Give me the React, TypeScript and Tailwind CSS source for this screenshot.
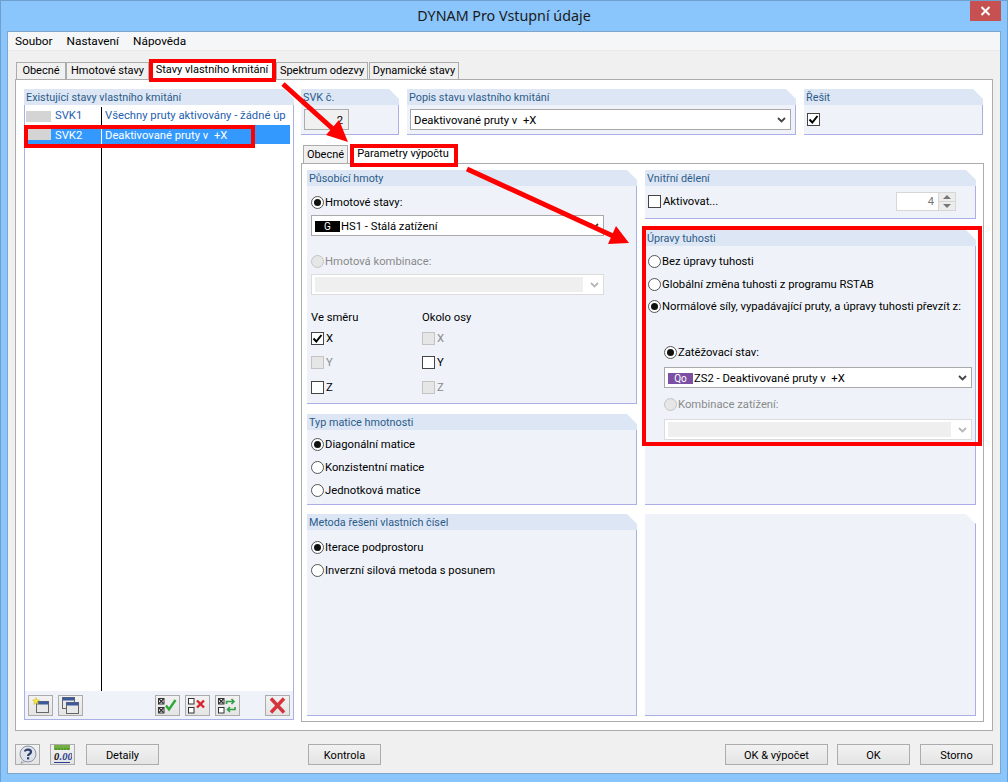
import React from 'react';

const Group: React.FC<{ title: string; className?: string; children?: React.ReactNode }> = ({ title, className = '', children }) => (
    <div className={`flex flex-col ${className}`}>
        <div className="h-[16px] shrink-0 whitespace-nowrap bg-[#dce6f4] pl-[2px] text-[10.8px] leading-[17px] text-[#2c5c8a] [clip-path:polygon(0_0,calc(100%-10px)_0,100%_10px,100%_100%,0_100%)]">{title}</div>
        <div className="flex flex-1 flex-col border-r border-b border-[#aab0e6] bg-[#eff3f9]">{children}</div>
    </div>
);

const Radio: React.FC<{ label: string; checked?: boolean; disabled?: boolean; className?: string }> = ({ label, checked, disabled, className = '' }) => (
    <div className={`flex h-[20px] shrink-0 items-center gap-[1px] whitespace-nowrap ${disabled ? 'text-[#8a8a8a]' : 'text-black'} ${className}`}>
        <div className={`flex h-[13px] w-[13px] shrink-0 items-center justify-center rounded-full border ${disabled ? 'border-[#c4c4c4] bg-[#e6e6e6]' : 'border-[#555555] bg-white'}`}>
            {checked && <div className="h-[7px] w-[7px] rounded-full bg-[#111111]" />}
        </div>
        <span className="pt-[2px]">{label}</span>
    </div>
);

const Check: React.FC<{ label: string; checked?: boolean; disabled?: boolean; className?: string }> = ({ label, checked, disabled, className = '' }) => (
    <div className={`flex h-[20px] items-center gap-[2px] whitespace-nowrap ${disabled ? 'text-[#8a8a8a]' : 'text-black'} ${className}`}>
        <div className={`flex h-[13px] w-[13px] shrink-0 items-center justify-center border ${disabled ? 'border-[#c4c4c4] bg-[#e6e6e6]' : 'border-[#444444] bg-white'}`}>
            {checked && (
                <svg width="11" height="11" viewBox="0 0 11 11"><path d="M1.5 5.5 4.3 8.5 9.5 2" fill="none" stroke="#000" strokeWidth="2" /></svg>
            )}
        </div>
        <span className="pt-[2px]">{label}</span>
    </div>
);

const Chevron: React.FC<{ color?: string }> = ({ color = '#444444' }) => (
    <svg width="9" height="6" viewBox="0 0 9 6"><path d="M1 1 4.5 4.5 8 1" fill="none" stroke={color} strokeWidth="1.8" /></svg>
);

const Select: React.FC<{ disabled?: boolean; className?: string; children?: React.ReactNode }> = ({ disabled, className = '', children }) => (
    <div className={`flex h-[21px] shrink-0 items-center whitespace-nowrap border bg-white pl-[3px] ${disabled ? 'border-[#dcdcdc]' : 'border-[#a9a9a9]'} ${className}`}>
        <div className={`flex min-w-0 flex-1 items-center ${disabled ? '' : 'pt-[2px]'}`}>
            {disabled ? <div className="mr-[2px] h-[15px] flex-1 bg-[#efefef]" /> : children}
        </div>
        <div className="flex w-[18px] shrink-0 justify-center">
            <Chevron color={disabled ? '#b8b8b8' : '#444444'} />
        </div>
    </div>
);

const Btn: React.FC<{ className?: string; children?: React.ReactNode }> = ({ className = '', children }) => (
    <div className={`flex h-[21px] shrink-0 items-center justify-center border border-[#acacac] bg-gradient-to-b from-[#f2f2f2] to-[#e4e4e4] text-black ${className}`}>{children}</div>
);

const Tab: React.FC<{ label: string; active?: boolean; className?: string }> = ({ label, active, className = '' }) => (
    <div className={`flex items-center justify-center whitespace-nowrap border border-b-0 border-[#acacac] ${active ? 'z-10 -mb-px bg-white pb-[2px]' : 'bg-[#f0f0f0]'} ${className}`}>{label}</div>
);

const WinIcon: React.FC<{ x: number; y: number }> = ({ x, y }) => (
    <g>
        <rect x={x} y={y} width="12" height="11" fill="#e8e8e8" stroke="#666" />
        <rect x={x} y={y} width="12" height="3" fill="#3c5a9a" />
    </g>
);

const NewIcon = () => (
    <svg width="18" height="17" viewBox="0 0 18 17">
        <WinIcon x={4.5} y={4.5} />
        <path d="M4 0.5 5 3 7.5 3 5.5 4.7 6.3 7.5 4 5.8 1.7 7.5 2.5 4.7 0.5 3 3 3Z" fill="#f6e93a" stroke="#c9b820" strokeWidth="0.5" />
    </svg>
);

const CopyIcon = () => (
    <svg width="17" height="17" viewBox="0 0 17 17">
        <WinIcon x={0.5} y={0.5} />
        <WinIcon x={4.5} y={5.5} />
    </svg>
);

const Boxes: React.FC<{ filled?: [boolean, boolean] }> = ({ filled = [false, false] }) => (
    <g>
        <rect x="0.5" y="1.5" width="5.5" height="5.5" fill="#fff" stroke="#333" />
        <rect x="0.5" y="10.5" width="5.5" height="5.5" fill="#fff" stroke="#333" />
        {filled[0] && <path d="M1 2 5.5 6.5M5.5 2 1 6.5" stroke="#333" strokeWidth="1.4" />}
        {filled[1] && <path d="M1 11 5.5 15.5M5.5 11 1 15.5" stroke="#333" strokeWidth="1.4" />}
    </g>
);

const CheckAllIcon = () => (
    <svg width="19" height="17" viewBox="0 0 19 17">
        <Boxes filled={[true, true]} />
        <path d="M8 8.5 11 12.5 17.5 3" fill="none" stroke="#2fa83a" strokeWidth="2.4" />
    </svg>
);

const UncheckAllIcon = () => (
    <svg width="19" height="17" viewBox="0 0 19 17">
        <Boxes />
        <path d="M9 3.5 16 10.5M16 3.5 9 10.5" fill="none" stroke="#d8232a" strokeWidth="2.4" />
    </svg>
);

const InvertIcon = () => (
    <svg width="19" height="17" viewBox="0 0 19 17">
        <Boxes filled={[true, false]} />
        <path d="M8.5 7V4.5H15.5M13.5 2 16 4.5 13.5 7M17 10V12.5H10M12 10 9.5 12.5 12 15" fill="none" stroke="#2f9e44" strokeWidth="1.6" />
    </svg>
);

const DeleteIcon = () => (
    <svg width="19" height="19" viewBox="0 0 19 19">
        <path d="M3 2.5 16 16.5M16 2.5 3 16.5" fill="none" stroke="#d8333a" strokeWidth="3.4" />
        <path d="M3 2.5 16 16.5" fill="none" stroke="#b04048" strokeWidth="0.6" />
    </svg>
);

const HelpIcon = () => (
    <svg width="20" height="19" viewBox="0 0 20 19">
        <circle cx="10" cy="9" r="8" fill="#dfe3ea" stroke="#8a93a3" />
        <path d="M4 16 3 18.5 7 16.5" fill="#dfe3ea" stroke="#8a93a3" strokeWidth="0.7" />
        <path d="M7 6.5C7 4 13 4 13 7C13 9 10 9 10 11" fill="none" stroke="#2c3e70" strokeWidth="2.2" />
        <rect x="9" y="12.2" width="2.2" height="2.2" fill="#2c3e70" />
    </svg>
);

const CalcIcon = () => (
    <svg width="18" height="19" viewBox="0 0 18 19">
        <rect x="0" y="0" width="16" height="5" fill="#72b043" />
        <path d="M2 3V5M5 3V5M8 3V5M11 3V5M14 3V5" stroke="#3f7a22" strokeWidth="1" />
        <text x="0" y="15" fontSize="10.5" fontFamily="'Liberation Serif', serif" fontStyle="italic" fontWeight="700" fill="#111">0</text>
        <text x="5.5" y="15" fontSize="10.5" fontFamily="'Liberation Serif', serif" fontStyle="italic" fontWeight="700" fill="#2c3e90">.00</text>
        <path d="M0 17.5H16" stroke="#2c3e90" strokeWidth="1" />
    </svg>
);

// red annotation layer that lies over the dialog
const Annotations = () => (
    <>
        <div className="absolute left-[148px] top-[58px] z-20 h-[23px] w-[127px] border-[4px] border-[#ff0000]" />
        <div className="absolute left-[23px] top-[124px] z-20 h-[23px] w-[231px] border-[4px] border-[#ff0000]" />
        <div className="absolute left-[349px] top-[143px] z-20 h-[23px] w-[108px] border-[4px] border-[#ff0000]" />
        <div className="absolute left-[641px] top-[225px] z-20 h-[220px] w-[340px] border-[4px] border-[#ff0000]" />
        <svg className="absolute left-0 top-0 z-20" width="1008" height="782" viewBox="0 0 1008 782">
            <path d="M282 83 332 128" stroke="#ff0000" strokeWidth="5" />
            <path d="M347 141 325 134 338 119Z" fill="#ff0000" />
            <path d="M466 168 612 235" stroke="#ff0000" strokeWidth="5" />
            <path d="M628 242 607 243 615 225Z" fill="#ff0000" />
        </svg>
    </>
);

export default function App() {
    return (
        <div className="relative flex h-[782px] w-[1008px] flex-col overflow-hidden border-t border-l border-r border-[#6f9fcf] bg-[#8ac5fb] font-['Roboto','Liberation_Sans',sans-serif] text-[11px] leading-[16px] text-black">
            {/* Title bar */}
            <div className="relative flex h-[30px] shrink-0 items-center justify-center font-['Noto_Sans',sans-serif] text-[14.3px] text-[#1a1a1a]">
                DYNAM Pro Vstupní údaje
                <div className="absolute right-[6px] top-0 flex h-[20px] w-[31px] items-center justify-center bg-[#c75050]">
                    <svg width="11" height="10" viewBox="0 0 11 10"><path d="M1.5 1 9.5 9M9.5 1 1.5 9" stroke="#fff" strokeWidth="2" /></svg>
                </div>
            </div>

            <div className="mx-[6px] mb-[8px] flex flex-1 flex-col border border-[#7ea6cc] bg-[#f0f0f0]">
                {/* Menu */}
                <div className="flex h-[19px] shrink-0 items-center gap-[14px] border-b border-[#e8e8e8] bg-[#f5f6f7] pl-[7px] text-[11.8px]">
                    <span>Soubor</span>
                    <span>Nastavení</span>
                    <span>Nápověda</span>
                </div>

                {/* Main tabs */}
                <div className="mt-[9px] flex h-[19px] shrink-0 items-stretch pl-[8px]">
                    <Tab label="Obecné" className="mt-[2px] w-[50px]" />
                    <Tab label="Hmotové stavy" className="mt-[2px] w-[83px]" />
                    <Tab label="Stavy vlastního kmitání" active className="ml-[1px] w-[124px]" />
                    <Tab label="Spektrum odezvy" className="ml-[2px] mt-[2px] w-[92px]" />
                    <Tab label="Dynamické stavy" className="ml-[1px] mt-[2px] w-[90px]" />
                </div>

                <div className="mx-[7px] flex h-[652px] shrink-0 gap-[7px] border border-[#acacac] bg-white pl-[8px] pt-[9px] text-[11.25px]">
                    {/* Left list */}
                    <Group title="Existující stavy vlastního kmitání" className="h-[631px] w-[270px] shrink-0">
                        <div className="flex flex-1 flex-col border-l border-[#aab0e6] bg-white pr-[3px] pt-[2px]">
                            <div className="flex h-[18px] items-center whitespace-nowrap text-[#1f5fb0]">
                                <div className="flex h-full w-[77px] shrink-0 items-center border-r border-black pl-[1px]">
                                    <div className="h-[11px] w-[25px] bg-[#d4d4d4]" />
                                    <span className="ml-[4px]">SVK1</span>
                                </div>
                                <span className="ml-[3px]">Všechny pruty aktivovány - žádné úp</span>
                            </div>
                            <div className="flex h-[19px] items-center whitespace-nowrap bg-[#3399ff] text-white">
                                <div className="flex h-full w-[77px] shrink-0 items-center border-r border-white pl-[1px]">
                                    <div className="h-[11px] w-[25px] bg-[#d4d4d4]" />
                                    <span className="ml-[4px] pt-[2px]">SVK2</span>
                                </div>
                                <span className="ml-[3px] pt-[2px]">Deaktivované pruty v&nbsp; +X</span>
                            </div>
                            <div className="w-[77px] flex-1 border-r border-black" />
                        </div>
                        <div className="flex h-[28px] shrink-0 items-center border-l border-[#aab0e6] pl-[3px]">
                            <Btn className="w-[25px]"><NewIcon /></Btn>
                            <Btn className="ml-[5px] w-[25px]"><CopyIcon /></Btn>
                            <Btn className="ml-[72px] w-[25px]"><CheckAllIcon /></Btn>
                            <Btn className="ml-[5px] w-[25px]"><UncheckAllIcon /></Btn>
                            <Btn className="ml-[5px] w-[25px]"><InvertIcon /></Btn>
                            <Btn className="ml-[25px] w-[25px]"><DeleteIcon /></Btn>
                        </div>
                    </Group>

                    {/* Right side */}
                    <div className="flex w-[683px] shrink-0 flex-col">
                        <div className="flex h-[46px] shrink-0 gap-[8px]">
                            <Group title="SVK č." className="w-[98px]">
                                <div className="ml-[3px] mt-[4px] flex h-[21px] w-[45px] items-center justify-end border border-[#acacac] bg-[#f0f0f0] pr-[5px] pt-[2px]">2</div>
                            </Group>
                            <Group title="Popis stavu vlastního kmitání" className="w-[389px]">
                                <Select className="ml-[3px] mr-[4px] mt-[4px]">Deaktivované pruty v&nbsp; +X</Select>
                            </Group>
                            <Group title="Řešit" className="w-[179px]">
                                <div className="ml-[3px] mt-[4px]"><Check label="" checked /></div>
                            </Group>
                        </div>

                        <div className="mt-[9px] flex h-[19px] shrink-0 items-stretch text-[11px]">
                            <Tab label="Obecné" className="ml-[2px] mt-[1px] w-[45px]" />
                            <Tab label="Parametry výpočtu" active className="ml-[2px] w-[106px]" />
                        </div>

                        <div className="flex h-[559px] shrink-0 gap-[8px] border border-[#acacac] bg-white pl-[5px] pt-[6px]">
                            <div className="flex w-[330px] shrink-0 flex-col gap-[10px]">
                                <Group title="Působící hmoty" className="h-[234px] shrink-0">
                                    <div className="flex flex-col px-[4px]">
                                        <Radio label="Hmotové stavy:" checked className="mt-[6px]" />
                                        <Select className="mt-[3px] w-[293px]">
                                            <div className="flex h-[11px] w-[25px] items-center justify-center bg-black text-[10px] text-white">G</div>
                                            <span className="ml-[1px]">HS1 - Stálá zatížení</span>
                                        </Select>
                                        <Radio label="Hmotová kombinace:" disabled className="mt-[15px]" />
                                        <Select disabled className="mt-[3px] w-[293px]" />
                                        <div className="mt-[12px] grid w-[222px] grid-cols-2">
                                            <div className="flex h-[20px] items-center pt-[2px]">Ve směru</div>
                                            <div className="flex h-[20px] items-center pt-[2px]">Okolo osy</div>
                                            <Check label="X" checked className="mt-[1px]" />
                                            <Check label="X" disabled className="mt-[1px]" />
                                            <Check label="Y" disabled className="mt-[4px]" />
                                            <Check label="Y" className="mt-[4px]" />
                                            <Check label="Z" className="mt-[5px]" />
                                            <Check label="Z" disabled className="mt-[5px]" />
                                        </div>
                                    </div>
                                </Group>
                                <Group title="Typ matice hmotnosti" className="h-[91px] shrink-0">
                                    <div className="flex flex-col gap-[3px] px-[4px] pt-[4px]">
                                        <Radio label="Diagonální matice" checked />
                                        <Radio label="Konzistentní matice" />
                                        <Radio label="Jednotková matice" />
                                    </div>
                                </Group>
                                <Group title="Metoda řešení vlastních čísel" className="mt-[-1px] h-[202px] shrink-0">
                                    <div className="flex flex-col gap-[3px] px-[4px] pt-[7px]">
                                        <Radio label="Iterace podprostoru" checked />
                                        <Radio label="Inverzní silová metoda s posunem" />
                                    </div>
                                </Group>
                            </div>

                            <div className="flex w-[331px] shrink-0 flex-col gap-[11px]">
                                <Group title="Vnitřní dělení" className="h-[49px] shrink-0">
                                    <div className="mt-[5px] flex items-center pl-[3px] pr-[19px]">
                                        <Check label="Aktivovat..." />
                                        <div className="ml-auto flex h-[19px] w-[60px] border border-[#d6d6d6] bg-white">
                                            <div className="flex flex-1 items-center justify-end pr-[4px] pt-[2px] text-[#777777]">4</div>
                                            <div className="flex w-[17px] flex-col border-l border-[#d6d6d6] bg-[#ececec]">
                                                <div className="flex flex-1 items-center justify-center border-b border-[#d6d6d6]">
                                                    <div className="h-0 w-0 border-x-[4px] border-b-[4px] border-x-transparent border-b-[#777777]" />
                                                </div>
                                                <div className="flex flex-1 items-center justify-center">
                                                    <div className="h-0 w-0 border-x-[4px] border-t-[4px] border-x-transparent border-t-[#777777]" />
                                                </div>
                                            </div>
                                        </div>
                                    </div>
                                </Group>
                                <Group title="Úpravy tuhosti" className="h-[275px] shrink-0">
                                    <div className="flex flex-col px-[3px]">
                                        <Radio label="Bez úpravy tuhosti" className="mt-[5px]" />
                                        <Radio label="Globální změna tuhosti z programu RSTAB" className="mt-[3px]" />
                                        <Radio label="Normálové síly, vypadávající pruty, a úpravy tuhosti převzít z:" checked className="mt-[2px]" />
                                        <Radio label="Zatěžovací stav:" checked className="ml-[16px] mt-[26px]" />
                                        <Select className="ml-[16px] mt-[5px] w-[308px]">
                                            <div className="flex h-[11px] w-[25px] items-center justify-center bg-[#7b4fa3] text-[10px] text-white">Qo</div>
                                            <span className="ml-[1px]">ZS2 - Deaktivované pruty v&nbsp; +X</span>
                                        </Select>
                                        <Radio label="Kombinace zatížení:" disabled className="ml-[16px] mt-[6px]" />
                                        <Select disabled className="ml-[16px] mt-[5px] w-[308px]" />
                                    </div>
                                </Group>
                                <div className="-mt-[2px] h-[202px] shrink-0 border-r border-b border-[#aab0e6] bg-[#eff3f9] [clip-path:polygon(0_0,calc(100%-10px)_0,100%_10px,100%_100%,0_100%)]" />
                            </div>
                        </div>
                    </div>
                </div>

                {/* Bottom buttons */}
                <div className="mx-[7px] mt-[13px] flex">
                    <Btn className="w-[25px]"><HelpIcon /></Btn>
                    <Btn className="ml-[10px] w-[25px]"><CalcIcon /></Btn>
                    <Btn className="ml-[11px] w-[73px] pt-[2px]">Detaily</Btn>
                    <Btn className="ml-[149px] w-[73px] pt-[2px]">Kontrola</Btn>
                    <Btn className="ml-auto w-[103px] pt-[2px]">OK &amp; výpočet</Btn>
                    <Btn className="ml-[9px] w-[73px] pt-[2px]">OK</Btn>
                    <Btn className="ml-[10px] w-[73px] pt-[2px]">Storno</Btn>
                </div>
            </div>

            <Annotations />
        </div>
    );
}
